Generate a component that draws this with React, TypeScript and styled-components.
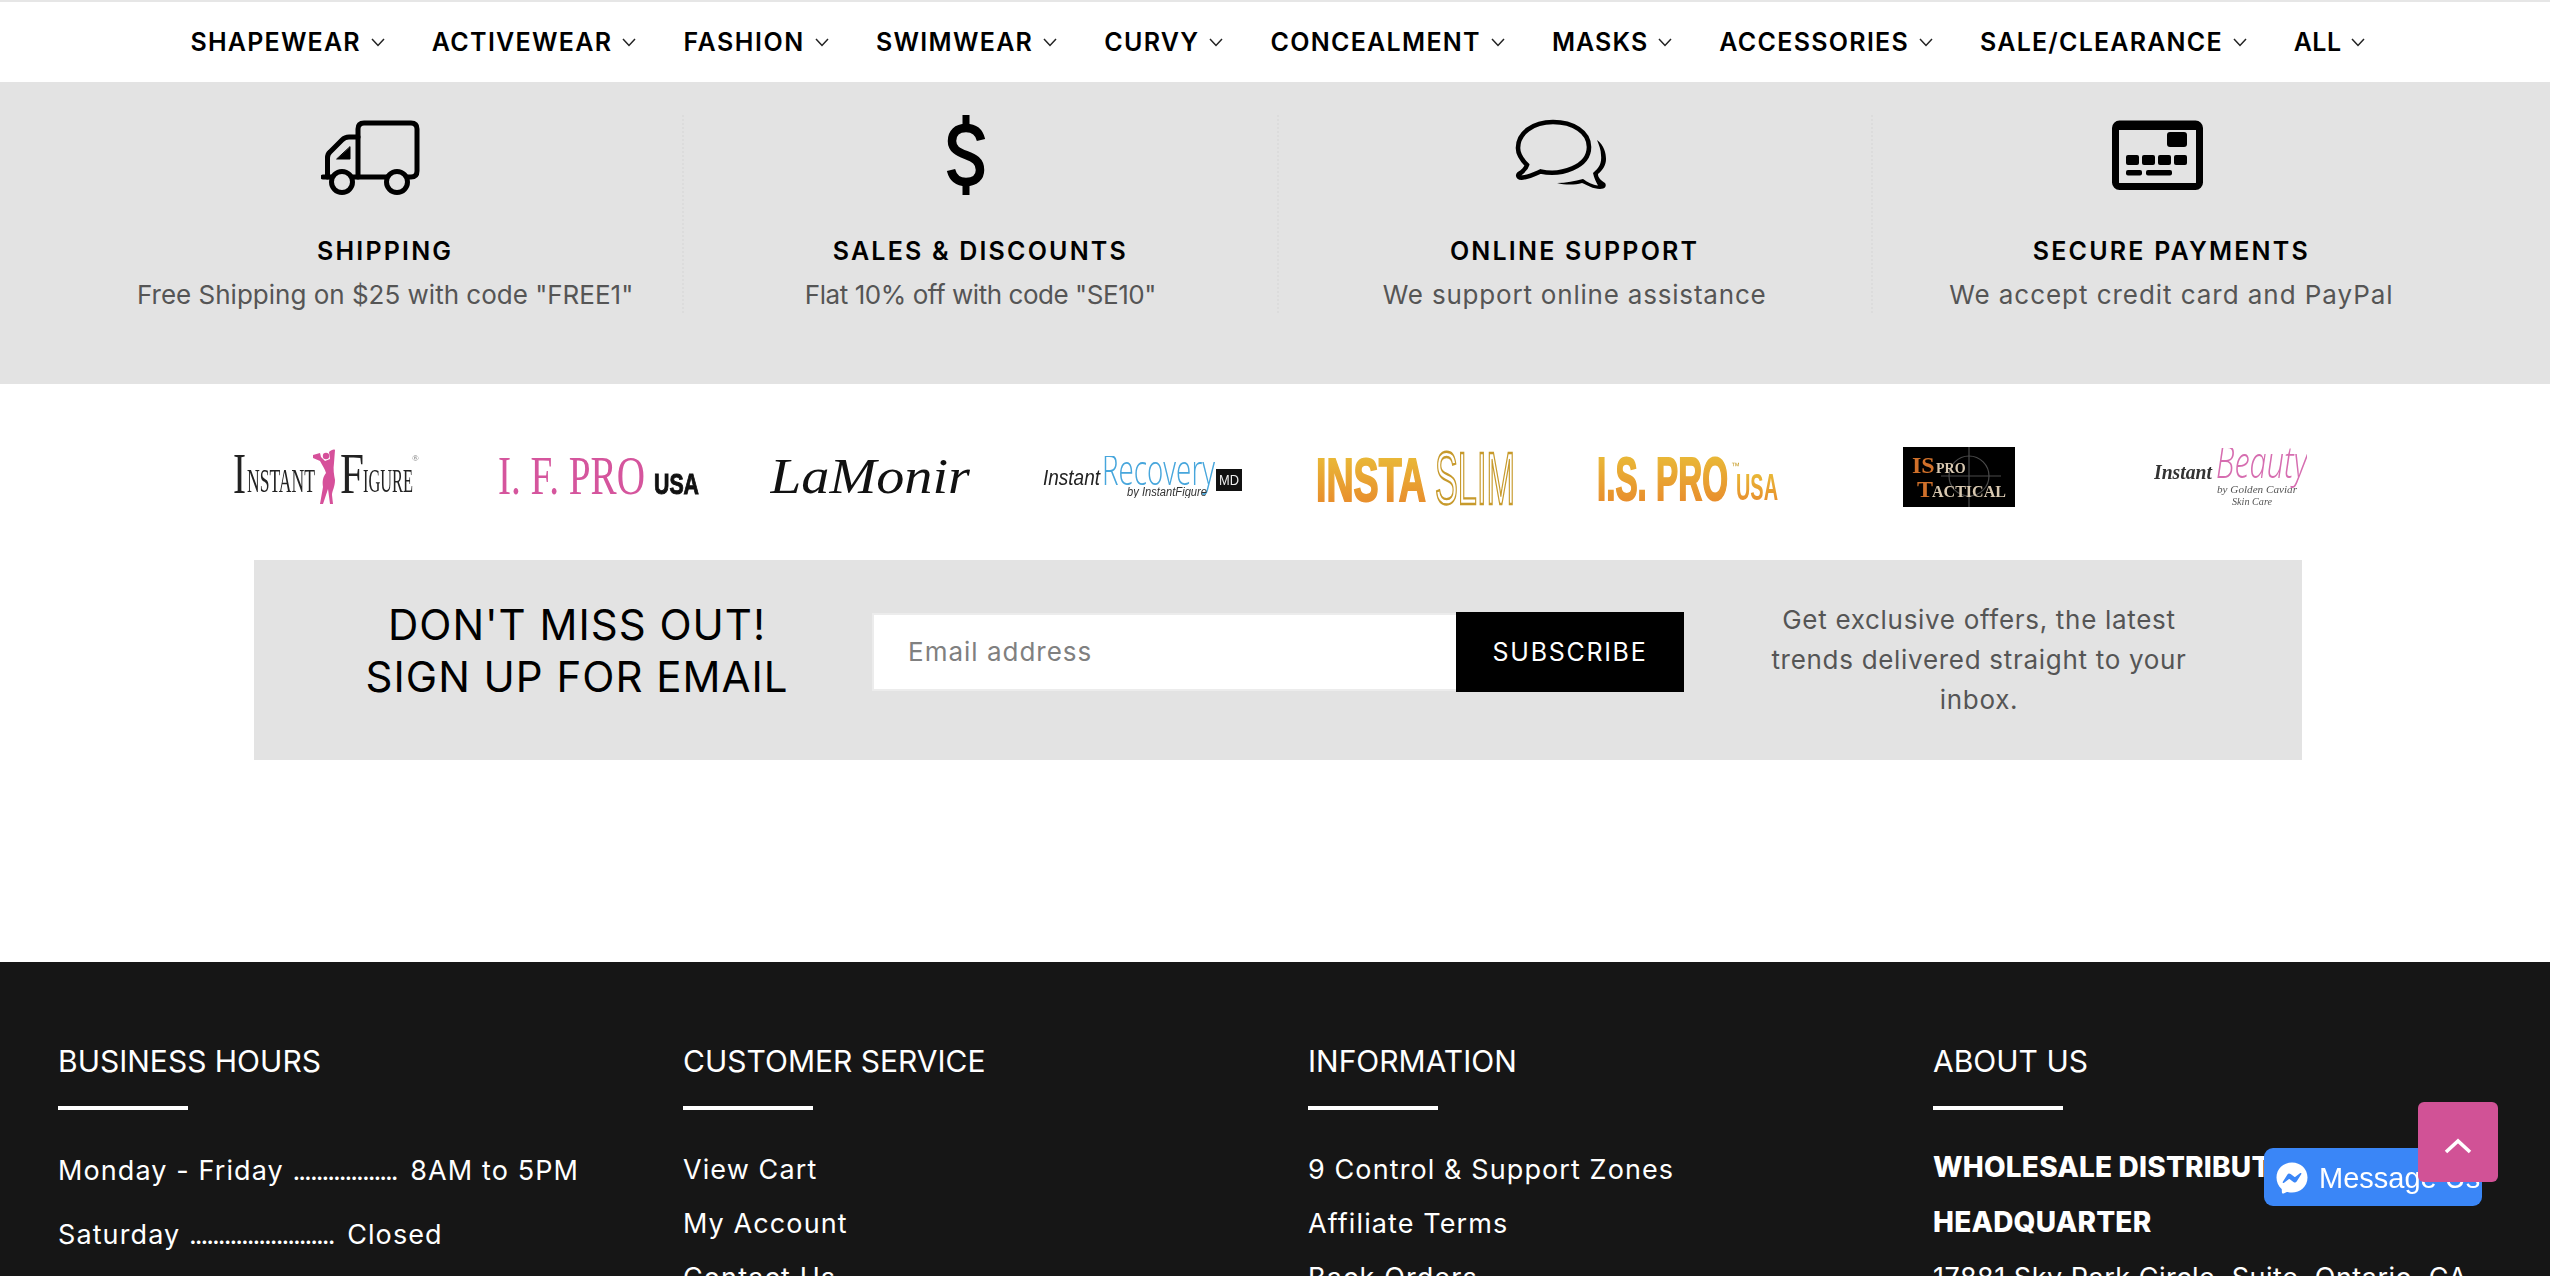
import React from 'react';
import styled, { createGlobalStyle } from 'styled-components';
import { FaFacebookMessenger } from 'react-icons/fa';

const navItems = [
  { label: 'SHAPEWEAR', spacing: 1.2 },
  { label: 'ACTIVEWEAR', spacing: 1.3 },
  { label: 'FASHION', spacing: 1.6 },
  { label: 'SWIMWEAR', spacing: 1.3 },
  { label: 'CURVY', spacing: 1.3 },
  { label: 'CONCEALMENT', spacing: 1.3 },
  { label: 'MASKS', spacing: 1.1 },
  { label: 'ACCESSORIES', spacing: 1.3 },
  { label: 'SALE/CLEARANCE', spacing: 1.2 },
  { label: 'ALL', spacing: 0.4 },
];

const GlobalStyle = createGlobalStyle`
  html, body {
    margin: 0;
    padding: 0;
    height: 1276px;
    overflow: hidden;
    background: #fff;
    font-family: Inter, "Liberation Sans", sans-serif;
  }
`;

const Page = styled.div`
  height: 1276px;
  overflow: hidden;
`;

const Nav = styled.nav`
  height: 80px;
  box-sizing: content-box;
  padding-left: 6px;
  border-top: 2px solid #e6e6e6;
  display: flex;
  justify-content: center;
  align-items: center;
  gap: 47px;
  background: #fff;
`;

const NavItem = styled.a<{ $spacing: number }>`
  display: flex;
  align-items: center;
  gap: 10px;
  font-size: 25px;
  font-weight: 600;
  color: #000;
  letter-spacing: ${(p) => p.$spacing}px;
`;

const Features = styled.section`
  display: grid;
  grid-template-columns: repeat(4, 1fr);
  padding: 33px 85px 71px 88px;
  background: #e3e3e3;
`;

const Feature = styled.div<{ $first?: boolean }>`
  height: 198px;
  text-align: center;
  border-left: ${(p) => (p.$first ? 'none' : '2px dotted #dcdcdc')};
  &:last-child {
    padding-left: 5px;
  }
`;

const IconSlot = styled.div`
  height: 80px;
  display: flex;
  justify-content: center;
  align-items: center;
  padding-right: 28px;
`;

const FeatureTitle = styled.div`
  margin-top: 41px;
  height: 30px;
  line-height: 30px;
  font-size: 25px;
  font-weight: 600;
  letter-spacing: 2.2px;
  color: #000;
`;

const FeatureText = styled.div<{ $spacing: number }>`
  margin-top: 11px;
  line-height: 36px;
  font-size: 26px;
  letter-spacing: ${(p) => p.$spacing}px;
  color: #555;
`;

const Brands = styled.section`
  height: 166px;
  padding: 10px 183px 0 190px;
  display: grid;
  grid-template-columns: repeat(8, 1fr);
  align-items: center;
  justify-items: center;
`;

const Logo = styled.svg`
  display: block;
  filter: blur(0.35px);
`;

const Newsletter = styled.section`
  height: 200px;
  margin: 0 248px 0 254px;
  background: #e3e3e3;
  display: grid;
  grid-template-columns: 620px 810px 1fr;
  align-items: center;
`;

const SignupHeading = styled.h2`
  margin: 0;
  padding: 0 0 18px 26px;
  text-align: center;
  font-size: 42px;
  line-height: 52px;
  font-weight: 400;
  letter-spacing: 1px;
  color: #000;
`;

const SignupForm = styled.form`
  display: flex;
  align-items: center;
  padding-bottom: 16px;
`;

const EmailInput = styled.input`
  box-sizing: border-box;
  width: 584px;
  height: 78px;
  margin-left: -2px;
  padding: 0 34px 2px;
  border: 2px solid #ececec;
  border-right: none;
  background: #fff;
  font-family: Inter, "Liberation Sans", sans-serif;
  font-size: 26px;
  letter-spacing: 1px;
  outline: none;
  &::placeholder {
    color: #808080;
    opacity: 1;
  }
`;

const SubscribeButton = styled.button`
  width: 228px;
  height: 80px;
  border: none;
  background: #000;
  color: #fff;
  font-family: Inter, "Liberation Sans", sans-serif;
  font-size: 25px;
  letter-spacing: 1.7px;
`;

const SignupText = styled.p`
  margin: 0 auto;
  padding-right: 28px;
  max-width: 440px;
  text-align: center;
  font-size: 26px;
  line-height: 40px;
  letter-spacing: 0.7px;
  color: #555;
`;

const Footer = styled.footer`
  margin-top: 202px;
  height: 400px;
  padding: 79px 0 0 58px;
  background: #161616;
  display: grid;
  grid-template-columns: repeat(4, 625px);
  align-items: start;
  color: #fff;
`;

const FooterHeading = styled.h3`
  margin: 0;
  height: 40px;
  line-height: 40px;
  font-size: 30px;
  font-weight: 400;
`;

const Rule = styled.div`
  width: 130px;
  height: 4px;
  margin: 25px 0 33px;
  background: #fff;
`;

const FooterLine = styled.div<{ $height: number }>`
  height: ${(p) => p.$height}px;
  line-height: ${(p) => p.$height}px;
  font-size: 27px;
  letter-spacing: 1.1px;
  white-space: nowrap;
`;

const BoldLine = styled(FooterLine)`
  font-size: 28px;
  font-weight: 800;
  letter-spacing: 0.2px;
`;

const AddressLine = styled(FooterLine)`
  letter-spacing: 0.5px;
`;

const HoursList = styled.div`
  margin-top: -4px;
`;

const AboutList = styled.div`
  margin-top: -3px;
`;

const Dots = styled.span`
  letter-spacing: -2px;
  margin-right: 5px;
`;

const MessengerButton = styled.a`
  position: fixed;
  left: 2264px;
  top: 1148px;
  width: 218px;
  height: 58px;
  box-sizing: border-box;
  padding: 2px 0 0 12px;
  display: flex;
  align-items: center;
  gap: 11px;
  border-radius: 9px;
  background: #3a86f7;
  color: #fff;
  font-family: "Liberation Sans", Arial, sans-serif;
  font-size: 29px;
`;

const TopButton = styled.a`
  position: fixed;
  left: 2418px;
  top: 1102px;
  width: 80px;
  height: 80px;
  padding-top: 8px;
  box-sizing: border-box;
  display: flex;
  justify-content: center;
  align-items: center;
  border-radius: 6px;
  background: #d15296;
`;

const Chevron = () => (
  <svg width="14" height="9" viewBox="0 0 14 9" fill="none" stroke="#222" strokeWidth="1.5">
    <polyline points="1,1 7,7.5 13,1" />
  </svg>
);

const TruckIcon = () => (
  <svg width="100" height="80" viewBox="21 10 100 80" fill="none" stroke="#000" strokeWidth="5" strokeLinecap="round" strokeLinejoin="round">
    <path d="M58 72 V24 Q58 18 64 18 H111 Q117 18 117 24 V66 Q117 72 111 72 H108" />
    <path d="M87 72 H53" />
    <path d="M58 32 H49 Q45 32 42 35 L30 47 Q27.5 49 27.5 53 V72" />
    <path d="M23 72 H31" />
    <circle cx="42" cy="77" r="10.5" />
    <circle cx="97" cy="77" r="10.5" />
    <polygon points="50,42 50,54 37,54" fill="#000" strokeWidth="1" />
  </svg>
);

const DollarIcon = () => (
  <svg width="40" height="80" viewBox="0 0 40 80" fill="none" stroke="#000">
    <path strokeWidth="8.5" d="M35 25 C33 16 27 13 20 13 C11 13 6 18 6 26 C6 34 12 37 20 40 C28 43 34 46 34 55 C34 62 29 67 20 67 C12 67 7 63 5 55" />
    <rect x="16.500" y="0" width="7" height="12" fill="#000" stroke="none" />
    <rect x="16.500" y="68" width="7" height="12" fill="#000" stroke="none" />
  </svg>
);

const ChatIcon = () => (
  <svg width="92" height="72" viewBox="14 14 92 72">
    <path fill="none" stroke="#000" strokeWidth="4.6" d="M39.500 66.500 C60 71 88 62 88 42 C88 27 72 17 52 17 C32 17 17 28 17 43 C17 50 21 55 26 60 C25 64 21 67 18 69 C16 71 18 73 22 72.500 C28 72 34 69 39.500 66.500 Z" />
    <path fill="#000" d="M96 35 C103 40 105 48 105 54 C105 60 102 65 97 69 C97 73 100 75 104 78 C106 81 104 84 99 84 C92 84 86 80 81 78 C74 80 64 80 56 78 C65 78 74 76 82 74 C86 77 92 80 97 80.500 C95 77 93 73 92 68 C98 63 101 58 100 50 C100 45 98 40 96 35 Z" />
  </svg>
);

const CardIcon = () => (
  <svg width="91" height="70" viewBox="0 0 91 70">
    <rect x="3.500" y="4" width="84" height="62.500" rx="4" fill="none" stroke="#000" strokeWidth="7" />
    <rect x="3" y="5" width="85" height="5" fill="#000" />
    <rect x="55" y="12" width="20" height="15" rx="3" />
    <rect x="14" y="35" width="13" height="10" rx="2" />
    <rect x="30" y="35" width="13" height="10" rx="2" />
    <rect x="46" y="35" width="13" height="10" rx="2" />
    <rect x="62" y="35" width="13" height="10" rx="2" />
    <rect x="14" y="50" width="16" height="5.500" rx="2" />
    <rect x="34" y="50" width="26" height="5.500" rx="2" />
  </svg>
);

const serif = '"Liberation Serif", serif';
const sans = '"Liberation Sans", sans-serif';
const light = '"Open Sans", sans-serif';

const InstantFigureLogo = () => (
  <Logo width="186" height="56" viewBox="0 0 186 56" fontFamily={serif} fill="#222">
    <text x="0" y="44" fontSize="56" textLength="13" lengthAdjust="spacingAndGlyphs">I</text>
    <text x="14" y="43" fontSize="33" textLength="68" lengthAdjust="spacingAndGlyphs">NSTANT</text>
    <text x="107" y="44" fontSize="56" fontWeight="400" textLength="24" lengthAdjust="spacingAndGlyphs">F</text>
    <text x="130" y="43" fontSize="33" textLength="50" lengthAdjust="spacingAndGlyphs">IGURE</text>
    <text x="179" y="12" fontSize="9" fill="#777">®</text>
    <g fill="#d6509a">
      <circle cx="93" cy="7" r="3.200" />
      <path d="M96 3 C98 1 101 0 102 1 L101 14 C100 20 101 26 102 31 C102 38 99 42 99 46 L100 55 L97 55 L95 40 L90 55 L87 55 L90 38 C89 32 90 28 93 24 C92 20 89 16 87 12 L80 9 L80 6 L87 4 L88 8 L92 12 L97 10 Z" />
    </g>
  </Logo>
);

const IFProLogo = () => (
  <Logo width="201" height="38" viewBox="0 0 201 38" fontFamily={serif}>
    <text x="0" y="36" fontSize="54" fill="#d5559d" textLength="147" lengthAdjust="spacingAndGlyphs">I. F. PRO</text>
    <text x="156" y="36" fontSize="30" fontFamily={sans} fontWeight="700" fill="#111" stroke="#111" strokeWidth="1" textLength="45" lengthAdjust="spacingAndGlyphs">USA</text>
  </Logo>
);

const LaMonirLogo = () => (
  <Logo width="200" height="40" viewBox="0 0 200 40" fontFamily={serif}>
    <text x="0" y="36" fontSize="50" fontStyle="italic" fill="#111" textLength="200" lengthAdjust="spacingAndGlyphs">LaMonir</text>
  </Logo>
);

const InstantRecoveryLogo = () => (
  <Logo width="199" height="42" viewBox="0 0 199 42" fontFamily={sans}>
    <text x="0" y="29" fontSize="22" fontStyle="italic" fill="#222" textLength="57" lengthAdjust="spacingAndGlyphs">Instant</text>
    <text x="59" y="29" fontSize="42" fontFamily={light} fontWeight="300" fill="#47a6dc" textLength="113" lengthAdjust="spacingAndGlyphs">Recovery</text>
    <text x="84" y="40" fontSize="12" fontStyle="italic" fill="#333" textLength="80" lengthAdjust="spacingAndGlyphs">by InstantFigure</text>
    <rect x="173" y="13" width="26" height="22" fill="#111" />
    <text x="176" y="29" fontSize="14" fill="#eee" textLength="20" lengthAdjust="spacingAndGlyphs">MD</text>
  </Logo>
);

const InstaSlimLogo = () => (
  <Logo width="200" height="63" viewBox="0 0 200 63" fontFamily={sans}>
    <defs>
      <linearGradient id="goldA" x1="0" y1="0" x2="0" y2="1">
        <stop offset="0" stopColor="#e9c33a" />
        <stop offset="1" stopColor="#e8842a" />
      </linearGradient>
    </defs>
    <text x="1" y="55" fontSize="62" fontWeight="700" fill="url(#goldA)" stroke="url(#goldA)" strokeWidth="2" textLength="110" lengthAdjust="spacingAndGlyphs">INSTA</text>
    <text x="120" y="58" fontSize="74" fill="none" stroke="#c79a2c" strokeWidth="2.4" textLength="80" lengthAdjust="spacingAndGlyphs">SLIM</text>
  </Logo>
);

const ISProLogo = () => (
  <Logo width="182" height="50" viewBox="0 0 182 50" fontFamily={sans}>
    <defs>
      <linearGradient id="goldB" x1="0" y1="0" x2="0" y2="1">
        <stop offset="0" stopColor="#e9c33a" />
        <stop offset="1" stopColor="#e8842a" />
      </linearGradient>
    </defs>
    <text x="1" y="48" fontSize="62" fontWeight="700" fill="url(#goldB)" stroke="url(#goldB)" strokeWidth="2" textLength="131" lengthAdjust="spacingAndGlyphs">I.S. PRO</text>
    <text x="135" y="17" fontSize="9" fill="#c9a030">™</text>
    <text x="140" y="48" fontSize="36" fontWeight="700" fill="url(#goldB)" textLength="42" lengthAdjust="spacingAndGlyphs">USA</text>
  </Logo>
);

const TacticalLogo = () => (
  <Logo width="112" height="60" viewBox="0 0 112 60" fontFamily={serif} fontWeight="700">
    <rect width="112" height="60" fill="#000" />
    <g fill="none" stroke="#4a4a4a" strokeWidth="1.200">
      <circle cx="66" cy="29" r="20" />
      <path d="M66 0 V60 M38 29 H98" />
    </g>
    <text x="9" y="26" fontSize="24" fill="#d0702a">IS</text>
    <text x="33" y="26" fontSize="14" fill="#d8c8b0">PRO</text>
    <text x="14" y="50" fontSize="24" fill="#d0702a">T</text>
    <text x="29" y="50" fontSize="16" fill="#d8c8b0" textLength="74" lengthAdjust="spacingAndGlyphs">ACTICAL</text>
  </Logo>
);

const InstantBeautyLogo = () => (
  <Logo width="153" height="58" viewBox="0 0 153 58" fontFamily={sans}>
    <text x="0" y="31" fontSize="22" fontStyle="italic" fontFamily={serif} fontWeight="700" fill="#333" textLength="58" lengthAdjust="spacingAndGlyphs">Instant</text>
    <text x="62" y="30" fontSize="44" fontStyle="italic" fontFamily={light} fontWeight="300" fill="#d66db0" textLength="91" lengthAdjust="spacingAndGlyphs">Beauty</text>
    <text x="63" y="45" fontSize="11" fontStyle="italic" fontFamily={serif} fill="#555" textLength="80" lengthAdjust="spacingAndGlyphs">by Golden Caviar</text>
    <text x="78" y="57" fontSize="11" fontStyle="italic" fontFamily={serif} fill="#555" textLength="40" lengthAdjust="spacingAndGlyphs">Skin Care</text>
  </Logo>
);

const App = () => (
  <Page>
    <GlobalStyle />
    <Nav>
      {navItems.map((item) => (
        <NavItem key={item.label} $spacing={item.spacing}>
          {item.label}
          <Chevron />
        </NavItem>
      ))}
    </Nav>

    <Features>
      <Feature $first>
        <IconSlot><TruckIcon /></IconSlot>
        <FeatureTitle>SHIPPING</FeatureTitle>
        <FeatureText $spacing={0}>Free Shipping on $25 with code "FREE1"</FeatureText>
      </Feature>
      <Feature>
        <IconSlot><DollarIcon /></IconSlot>
        <FeatureTitle>SALES &amp; DISCOUNTS</FeatureTitle>
        <FeatureText $spacing={-0.45}>Flat 10% off with code "SE10"</FeatureText>
      </Feature>
      <Feature>
        <IconSlot><ChatIcon /></IconSlot>
        <FeatureTitle>ONLINE SUPPORT</FeatureTitle>
        <FeatureText $spacing={0.8}>We support online assistance</FeatureText>
      </Feature>
      <Feature>
        <IconSlot><CardIcon /></IconSlot>
        <FeatureTitle>SECURE PAYMENTS</FeatureTitle>
        <FeatureText $spacing={0.95}>We accept credit card and PayPal</FeatureText>
      </Feature>
    </Features>

    <Brands>
      <InstantFigureLogo />
      <IFProLogo />
      <LaMonirLogo />
      <InstantRecoveryLogo />
      <InstaSlimLogo />
      <ISProLogo />
      <TacticalLogo />
      <InstantBeautyLogo />
    </Brands>

    <Newsletter>
      <SignupHeading>DON'T MISS OUT!<br />SIGN UP FOR EMAIL</SignupHeading>
      <SignupForm>
        <EmailInput placeholder="Email address" />
        <SubscribeButton type="button">SUBSCRIBE</SubscribeButton>
      </SignupForm>
      <SignupText>Get exclusive offers, the latest trends delivered straight to your inbox.</SignupText>
    </Newsletter>

    <Footer>
      <div>
        <FooterHeading>BUSINESS HOURS</FooterHeading>
        <Rule />
        <HoursList>
          <FooterLine $height={64}>Monday - Friday <Dots>..................</Dots> 8AM to 5PM</FooterLine>
          <FooterLine $height={64}>Saturday <Dots>.........................</Dots> Closed</FooterLine>
        </HoursList>
      </div>
      <div>
        <FooterHeading>CUSTOMER SERVICE</FooterHeading>
        <Rule />
        <FooterLine $height={54}>View Cart</FooterLine>
        <FooterLine $height={54}>My Account</FooterLine>
        <FooterLine $height={54}>Contact Us</FooterLine>
      </div>
      <div>
        <FooterHeading>INFORMATION</FooterHeading>
        <Rule />
        <FooterLine $height={54}>9 Control &amp; Support Zones</FooterLine>
        <FooterLine $height={54}>Affiliate Terms</FooterLine>
        <FooterLine $height={54}>Back Orders</FooterLine>
      </div>
      <div>
        <FooterHeading>ABOUT US</FooterHeading>
        <Rule />
        <AboutList>
          <BoldLine $height={55}>WHOLESALE DISTRIBUTOR</BoldLine>
          <BoldLine $height={55}>HEADQUARTER</BoldLine>
          <AddressLine $height={55}>17881 Sky Park Circle, Suite, Ontario, CA</AddressLine>
        </AboutList>
      </div>
    </Footer>

    <MessengerButton>
      <FaFacebookMessenger size={32} />
      Message Us
    </MessengerButton>
    <TopButton>
      <svg width="28" height="16" viewBox="0 0 28 16" fill="none" stroke="#fff" strokeWidth="3.6">
        <polyline points="2,14 14,3 26,14" />
      </svg>
    </TopButton>
  </Page>
);

export default App;
